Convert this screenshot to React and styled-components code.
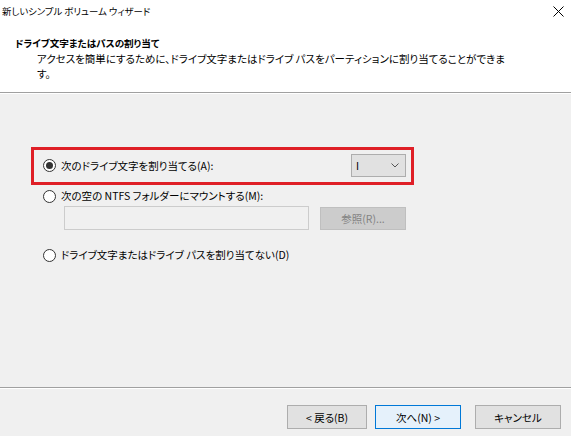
import React from "react";
import styled, { createGlobalStyle } from "styled-components";

const GlobalStyle = createGlobalStyle`
  html, body {
    margin: 0;
    padding: 0;
  }
  body {
    background: #f0f0f0;
    font-family: "Noto Sans CJK JP", "Noto Sans", sans-serif;
    font-size: 10.5px;
    color: #000;
    font-feature-settings: "palt";
  }
  #root {
    height: 100vh;
  }
`;

const Window = styled.div`
  display: flex;
  flex-direction: column;
  height: 100%;
`;

const Top = styled.div`
  background: #fff;
  border-bottom: 1px solid #a0a0a0;
  box-shadow: 0 1px 0 #fff;
`;

const TitleBar = styled.div`
  display: flex;
  align-items: center;
  justify-content: space-between;
  height: 22px;
  padding: 0 7px 0 2px;
  font-size: 9.4px;
  line-height: 22px;
`;

const Header = styled.div`
  padding: 13px 0 11px 15px;
`;

const HeaderTitle = styled.div`
  font-weight: bold;
  font-size: 9.6px;
  line-height: 16px;
`;

const HeaderText = styled.div`
  margin-left: 22px;
  line-height: 15px;
  white-space: nowrap;
`;

const Body = styled.div`
  flex: 1;
  padding: 54px 0 0 31px;
`;

const Column = styled.div`
  width: 383px;
  display: flex;
  flex-direction: column;
`;

const Highlight = styled.div`
  display: flex;
  align-items: center;
  justify-content: space-between;
  border: 3px solid #df1f27;
  padding: 4px 5px 5px 9px;
`;

const OptionRow = styled.label`
  display: flex;
  align-items: center;
  gap: 5px;
  line-height: 16px;
  padding-left: ${(p) => (p.$inset ? 12 : 0)}px;
  margin-top: ${(p) => p.$top || 0}px;
`;

const Radio = styled.span`
  box-sizing: border-box;
  width: 13px;
  height: 13px;
  border-radius: 50%;
  border: 1px solid #333;
  background: #fff;
  display: flex;
  align-items: center;
  justify-content: center;

  &::after {
    content: "";
    width: 7px;
    height: 7px;
    border-radius: 50%;
    background: ${(p) => (p.$checked ? "#333" : "transparent")};
  }
`;

const Select = styled.div`
  box-sizing: border-box;
  width: 55px;
  height: 23px;
  display: flex;
  align-items: center;
  justify-content: space-between;
  padding: 0 6px 0 4px;
  background: #e1e1e1;
  border: 1px solid #adadad;
`;

const PathRow = styled.div`
  display: flex;
  justify-content: space-between;
  align-items: center;
  margin: 2px 8px 0 33px;
`;

const TextBox = styled.div`
  box-sizing: border-box;
  width: 245px;
  height: 24px;
  background: #f0f0f0;
  border: 1px solid #cccccc;
`;

const Button = styled.button`
  box-sizing: border-box;
  height: ${(p) => (p.$short ? 23 : 24)}px;
  width: ${(p) => p.$w}px;
  margin-left: ${(p) => p.$gap || 0}px;
  font-family: inherit;
  font-size: 10.5px;
  font-feature-settings: "palt";
  padding: 0;
  color: ${(p) => (p.disabled ? "#838383" : "#000")};
  background: ${(p) =>
    p.disabled ? "#cccccc" : p.$primary ? "#e5f1fb" : "#e1e1e1"};
  border: 1px solid
    ${(p) => (p.disabled ? "#bfbfbf" : p.$primary ? "#0078d7" : "#adadad")};
`;

const Footer = styled.div`
  height: 49px;
  border-top: 1px solid #a0a0a0;
  box-shadow: inset 0 1px 0 #fff;
  display: flex;
  justify-content: flex-end;
  align-items: flex-start;
  padding: 17px 10px 0 0;
  box-sizing: border-box;
`;

const CloseIcon = () => (
  <svg width="11" height="11" viewBox="0 0 11 11">
    <path d="M0.5 0.5 L10.5 10.5 M10.5 0.5 L0.5 10.5" stroke="#000" strokeWidth="1" />
  </svg>
);

const Chevron = () => (
  <svg width="8" height="5" viewBox="0 0 8 5">
    <path d="M0.5 0.5 L4 4 L7.5 0.5" stroke="#555" fill="none" strokeWidth="1" />
  </svg>
);

export default function App() {
  return (
    <Window>
      <GlobalStyle />
      <Top>
        <TitleBar>
          <span>新しいシンプル ボリューム ウィザード</span>
          <CloseIcon />
        </TitleBar>
        <Header>
          <HeaderTitle>ドライブ文字またはパスの割り当て</HeaderTitle>
          <HeaderText>
            アクセスを簡単にするために、ドライブ文字またはドライブ パスをパーティションに割り当てることができま
            <br />す。
          </HeaderText>
        </Header>
      </Top>
      <Body>
        <Column>
          <Highlight>
            <OptionRow>
              <Radio $checked />
              次のドライブ文字を割り当てる(A):
            </OptionRow>
            <Select>
              <span>I</span>
              <Chevron />
            </Select>
          </Highlight>
          <OptionRow $inset $top={3}>
            <Radio />
            次の空の NTFS フォルダーにマウントする(M):
          </OptionRow>
          <PathRow>
            <TextBox />
            <Button disabled $w={86} $short>
              参照(R)...
            </Button>
          </PathRow>
          <OptionRow $inset $top={17}>
            <Radio />
            ドライブ文字またはドライブ パスを割り当てない(D)
          </OptionRow>
        </Column>
      </Body>
      <Footer>
        <Button $w={80}>&lt; 戻る(B)</Button>
        <Button $w={86} $gap={8} $primary>
          次へ(N) &gt;
        </Button>
        <Button $w={86} $gap={14}>
          キャンセル
        </Button>
      </Footer>
    </Window>
  );
}
